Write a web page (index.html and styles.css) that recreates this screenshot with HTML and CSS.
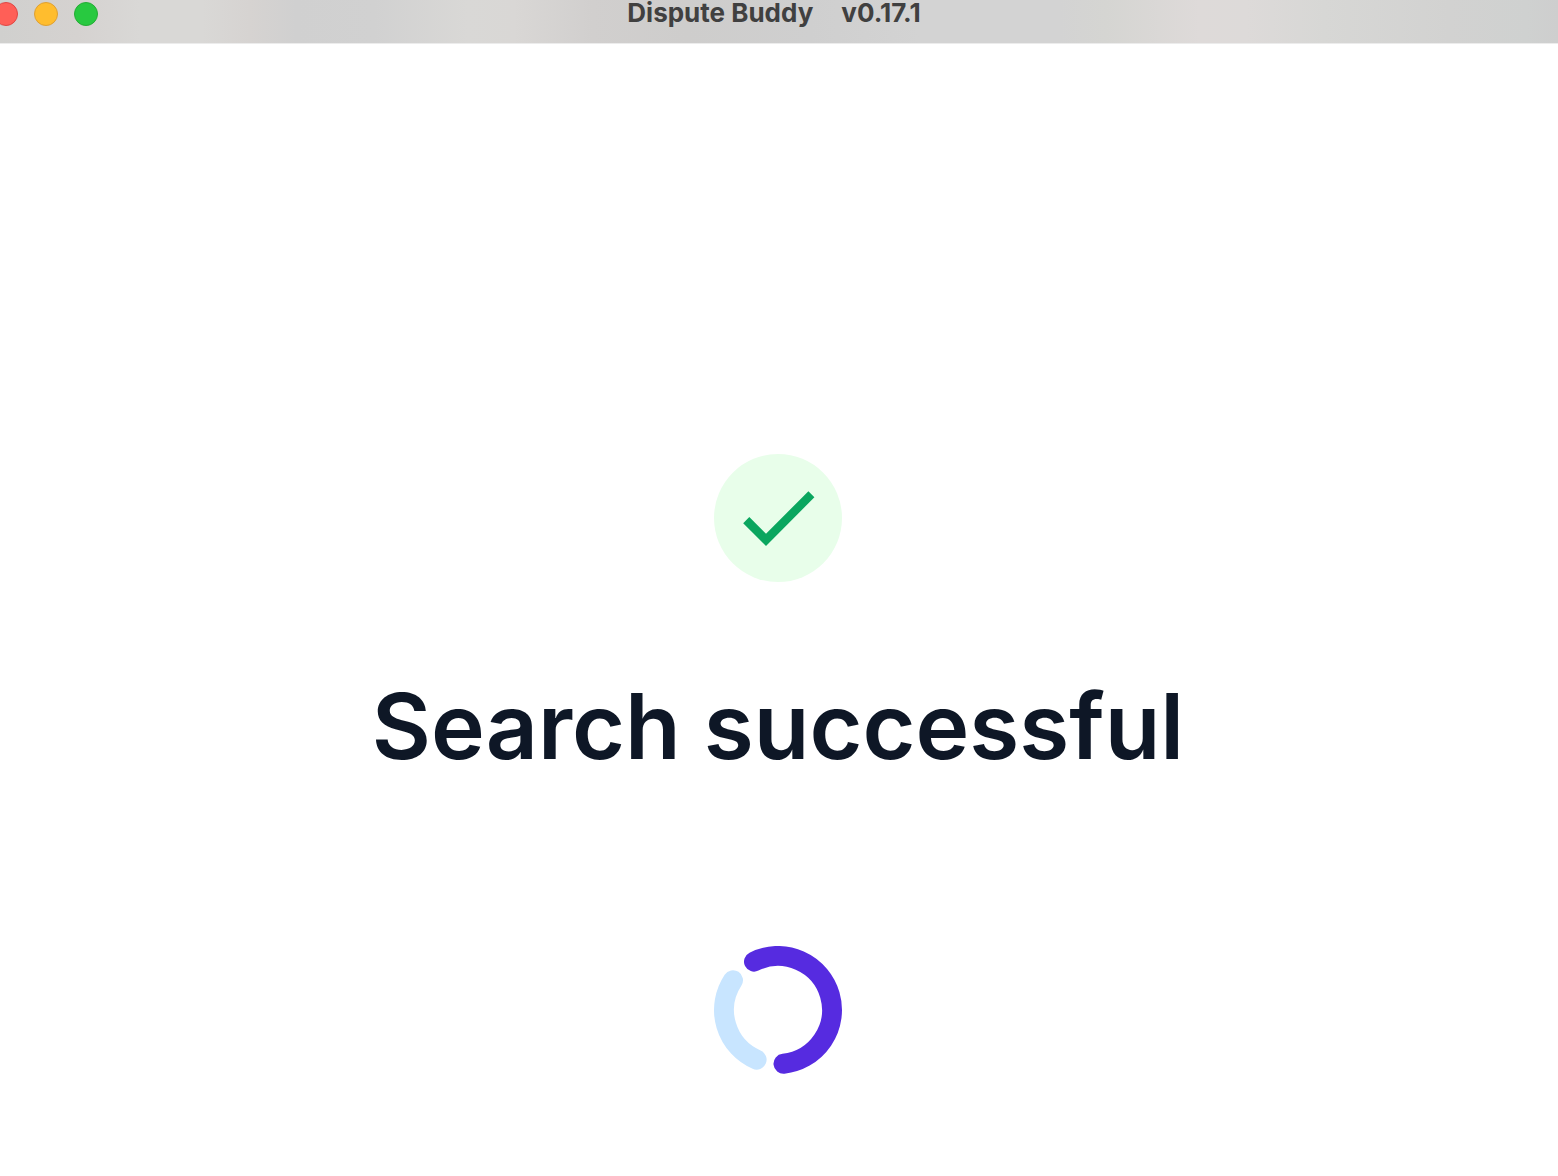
FILE: index.html
```
<!DOCTYPE html>
<html lang="en">

<head>
	<meta charset="utf-8">
	<title>Dispute Buddy</title>
	<meta name="viewport" content="width=device-width, initial-scale=1">
	<link rel="stylesheet" href="styles.css">
</head>

<body>
	<header class="titlebar">
		<div class="controls">
			<button class="control close" type="button" aria-label="Close"></button>
			<button class="control minimize" type="button" aria-label="Minimize"></button>
			<button class="control zoom" type="button" aria-label="Zoom"></button>
		</div>
		<div class="app-name">
			<span>Dispute Buddy</span>
			<span>v0.17.1</span>
		</div>
	</header>
	<main class="status">
		<svg class="check" viewBox="0 0 128 128" aria-hidden="true">
			<circle cx="64" cy="64" r="64" fill="#e8feea" />
			<path d="M29.2 69.2L35.3 63.1L52 79.8L94.4 37.2L100.4 43.3L52 91.9Z" fill="#0aa65f" />
		</svg>
		<h1>Search successful</h1>
		<svg class="spinner" viewBox="0 0 128 128" role="img" aria-label="Loading">
			<path d="M19 34.2A54 54 0 0 0 42.6 113.6" stroke="#c8e5ff" />
			<path d="M40 15.6A54 54 0 1 1 69.5 117.7" stroke="#562be0" />
		</svg>
	</main>
</body>

</html>
```

FILE: styles.css
```
* {
	box-sizing: border-box;
}

body {
	display: flex;
	flex-direction: column;
	min-height: 100vh;
	margin: 0;
	background: white;
	color: #0e1726;
	font-family: Inter, "Liberation Sans", sans-serif;
}

/* title bar */
.titlebar {
	display: grid;
	grid-template-columns: 1fr auto 1fr;
	height: 44px;
	padding: 2px 10px 0 0;
	border-bottom: 1px solid #ececec;
	background: linear-gradient(to right,
			#d0d0ce 0%,
			#d5d2d0 5%,
			#d9d8d6 9%,
			#d9d8d6 13%,
			#d6d3d1 16%,
			#d0d0d0 19%,
			#d1d1d1 24%,
			#d9d8d6 30%,
			#d9d7d5 33%,
			#d1cfce 38%,
			#cecdcc 44%,
			#cfcfcf 52%,
			#d3d3d3 59%,
			#d3d3d3 68%,
			#d5d5d2 71%,
			#dedad9 77%,
			#dddad9 80%,
			#d7d7d5 85%,
			#d2d2d1 93%,
			#cfd1d0 98%,
			#cecece 100%);
}

.controls {
	display: flex;
	gap: 16px;
	margin-left: -6px;
}

.control {
	width: 24px;
	height: 24px;
	padding: 0;
	border: 1px solid;
	border-radius: 50%;
}

.close {
	background: #ff5f57;
	border-color: #df4744;
}

.minimize {
	background: #ffbd2e;
	border-color: #dea034;
}

.zoom {
	background: #28c940;
	border-color: #25ac35;
}

.app-name {
	display: flex;
	gap: 28px;
	color: #404040;
	font-size: 26px;
	font-weight: 700;
	line-height: 22px;
}

/* search result */
.status {
	display: flex;
	flex: 1;
	flex-direction: column;
	align-items: center;
	padding: 410px 26px 96px 24px;
}

.check,
.spinner {
	flex: none;
	width: 128px;
	height: 128px;
}

.spinner path {
	fill: none;
	stroke-width: 20;
	stroke-linecap: round;
}

h1 {
	margin: 80px 0 156px;
	font-size: 91px;
	font-weight: 600;
	line-height: 128px;
	text-align: center;
}
```
